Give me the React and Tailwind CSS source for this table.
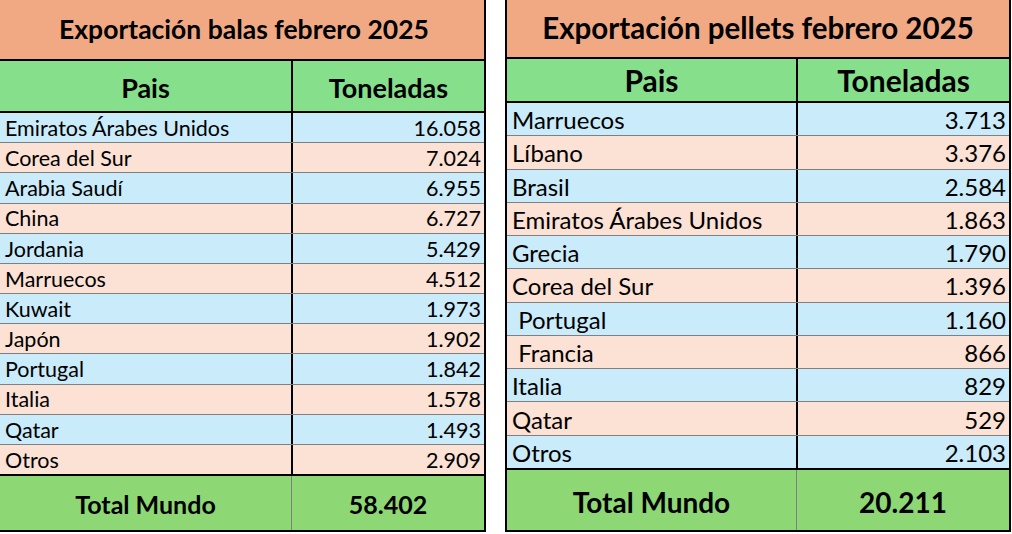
const balas = [
  ["Emiratos Árabes Unidos", "16.058"],
  ["Corea del Sur", "7.024"],
  ["Arabia Saudí", "6.955"],
  ["China", "6.727"],
  ["Jordania", "5.429"],
  ["Marruecos", "4.512"],
  ["Kuwait", "1.973"],
  ["Japón", "1.902"],
  ["Portugal", "1.842"],
  ["Italia", "1.578"],
  ["Qatar", "1.493"],
  ["Otros", "2.909"],
];

const pellets = [
  ["Marruecos", "3.713"],
  ["Líbano", "3.376"],
  ["Brasil", "2.584"],
  ["Emiratos Árabes Unidos", "1.863"],
  ["Grecia", "1.790"],
  ["Corea del Sur", "1.396"],
  [" Portugal", "1.160"],
  [" Francia", "866"],
  ["Italia", "829"],
  ["Qatar", "529"],
  ["Otros", "2.103"],
];

const font = { fontFamily: "Lato, 'Open Sans', sans-serif" };

const App = () => {
  return (
    <div className="w-[1012px] h-[534px] bg-white flex text-black" style={font}>
      {/* Balas */}
      <div className="w-[486px] h-[532px] flex flex-col border-r-2 border-b-2 border-black">
        <div className="h-[61px] bg-[#f1a984] border-b-2 border-black flex items-center justify-center pl-[4px]">
          <span className="text-[26.5px] font-bold">Exportación balas febrero 2025</span>
        </div>
        <div className="h-[52px] bg-[#86e08b] border-b-2 border-black flex">
          <div className="w-[293px] border-r-2 border-black flex items-center justify-center pt-[4px]">
            <span className="text-[27px] font-bold">Pais</span>
          </div>
          <div className="flex-1 flex items-center justify-center pt-[4px]">
            <span className="text-[27px] font-bold">Toneladas</span>
          </div>
        </div>
        <div className="h-[363px] flex flex-col border-b-2 border-black">
          {balas.map(([p, t], i) => (
            <div
              key={p}
              className={`flex-1 flex text-[21.5px] leading-none ${i % 2 === 0 ? "bg-[#c9ebfa]" : "bg-[#fce1d5]"} ${i < balas.length - 1 ? "border-b border-[#808080]" : ""}`}
            >
              <div className="w-[293px] border-r-2 border-black flex items-center pl-[5px] pt-[2px]">{p}</div>
              <div className="flex-1 flex items-center justify-end pr-[3px] pt-[2px]">{t}</div>
            </div>
          ))}
        </div>
        <div className="flex-1 bg-[#8dd874] flex">
          <div className="w-[292px] border-r border-[#808080] flex items-center justify-center pt-[4px]">
            <span className="text-[25px] font-bold">Total Mundo</span>
          </div>
          <div className="flex-1 flex items-center justify-center pt-[4px]">
            <span className="text-[25px] font-bold">58.402</span>
          </div>
        </div>
      </div>

      <div className="w-[19px]" />

      {/* Pellets */}
      <div className="w-[506px] h-[532px] flex flex-col border-x-2 border-b-2 border-black">
        <div className="h-[59px] bg-[#f1a984] border-b-2 border-black flex items-center justify-center">
          <span className="text-[29.5px] font-bold">Exportación pellets febrero 2025</span>
        </div>
        <div className="h-[44px] bg-[#86e08b] border-b-2 border-black flex">
          <div className="w-[291px] border-r-2 border-black flex items-center justify-center">
            <span className="text-[30px] font-bold">Pais</span>
          </div>
          <div className="flex-1 flex items-center justify-center">
            <span className="text-[30px] font-bold">Toneladas</span>
          </div>
        </div>
        <div className="h-[367px] flex flex-col border-b-2 border-black">
          {pellets.map(([p, t], i) => (
            <div
              key={p}
              className={`flex-1 flex text-[24px] leading-none ${i % 2 === 0 ? "bg-[#c9ebfa]" : "bg-[#fce1d5]"} ${i < pellets.length - 1 ? "border-b border-[#808080]" : ""}`}
            >
              <div className="w-[291px] border-r-2 border-black flex items-center pl-[5px] pt-[2px] whitespace-pre">{p}</div>
              <div className="flex-1 flex items-center justify-end pr-[3px] pt-[2px]">{t}</div>
            </div>
          ))}
        </div>
        <div className="flex-1 bg-[#8dd874] flex">
          <div className="w-[290px] border-r border-[#808080] flex items-center justify-center pt-[4px]">
            <span className="text-[28px] font-bold">Total Mundo</span>
          </div>
          <div className="flex-1 flex items-center justify-center pt-[4px]">
            <span className="text-[28px] font-bold">20.211</span>
          </div>
        </div>
      </div>
    </div>
  );
};

export default App;
